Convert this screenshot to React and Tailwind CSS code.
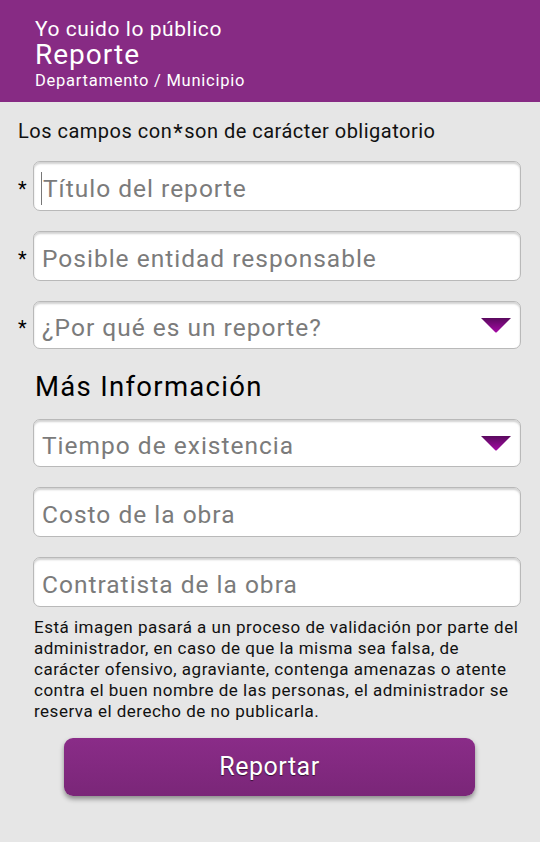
import React from 'react';

const font = { fontFamily: 'Roboto, "Noto Sans", sans-serif' };

function Caret() {
  return (
    <svg width="30" height="16" viewBox="0 0 30 16" className="shrink-0">
      <defs>
        <linearGradient id="cg" x1="0" y1="0" x2="0" y2="1">
          <stop offset="0" stopColor="#5a0a5e" />
          <stop offset="1" stopColor="#a40aa4" />
        </linearGradient>
      </defs>
      <path d="M0 1 H30 L16 15 Q15 16 14 15 Z" fill="url(#cg)" />
    </svg>
  );
}

function Field({ label, star, select, caret, h = 'h-[50px]' }) {
  return (
    <div className="flex items-center pr-[19px]">
      <div className="w-[33px] pl-[18px] text-[20px] leading-none text-black pt-[6px]">{star ? '*' : ''}</div>
      <div
        className={`flex-1 ${h} flex items-center bg-white rounded-[7px] border border-[#b9b9b9] shadow-[inset_0_2px_2px_rgba(0,0,0,0.18)] pl-[8px] pr-[9px] overflow-hidden`}
      >
        {caret && <span className="w-px h-[33px] bg-[#777] mr-[1px] -ml-[1px] mt-[4px] shrink-0" />}
        <span className="flex-1 mt-[6px] text-[24.5px] tracking-[1px] text-[#7b7b7b] leading-[30px] whitespace-nowrap">{label}</span>
        {select && <Caret />}
      </div>
    </div>
  );
}

export default function App() {
  return (
    <div className="w-[540px] h-[842px] bg-[#e6e6e6] flex flex-col overflow-hidden" style={font}>
      {/* Header */}
      <div className="h-[102px] bg-[#872b84] pl-[35px] pt-[17px] text-white shrink-0">
        <div className="text-[21px] leading-[24px] tracking-[0.55px]">Yo cuido lo público</div>
        <div className="text-[28px] leading-[28px] tracking-[1px]">Reporte</div>
        <div className="text-[16.5px] leading-[24px] tracking-[0.75px]">Departamento / Municipio</div>
      </div>

      <div className="pl-[18px] pt-[17px] text-[20px] leading-[24px] tracking-[0.5px] text-[#111]">
        Los campos con<span className="text-[22px] relative top-[2px] px-[1px]">*</span>son de carácter obligatorio
      </div>

      <div className="mt-[18px] flex flex-col gap-[20px]">
        <Field label="Título del reporte" star caret />
        <Field label="Posible entidad responsable" star />
        <Field label="¿Por qué es un reporte?" star select h="h-[48px]" />
      </div>

      <div className="pl-[35px] mt-[21px] text-[27.5px] leading-[34px] tracking-[1.3px] text-black">Más Información</div>

      <div className="mt-[15px] flex flex-col gap-[20px]">
        <Field label="Tiempo de existencia" select h="h-[48px]" />
        <Field label="Costo de la obra" />
        <Field label="Contratista de la obra" />
      </div>

      <p className="pl-[34px] pr-[14px] mt-[10px] text-[17px] leading-[21px] tracking-[0.5px] text-[#111]">
        Está imagen pasará a un proceso de validación por parte del administrador, en caso de que la misma sea falsa, de
        carácter ofensivo, agraviante, contenga amenazas o atente contra el buen nombre de las personas, el administrador se
        reserva el derecho de no publicarla.
      </p>

      <div className="mt-[16px] pl-[64px]">
        <button className="w-[411px] h-[58px] rounded-[9px] bg-gradient-to-b from-[#8a2c88] to-[#7a2678] text-white text-[25px] tracking-[0.5px] shadow-[0_3px_5px_rgba(0,0,0,0.4)] [text-shadow:0_1px_1px_rgba(0,0,0,0.6)]">
          Reportar
        </button>
      </div>
    </div>
  );
}
